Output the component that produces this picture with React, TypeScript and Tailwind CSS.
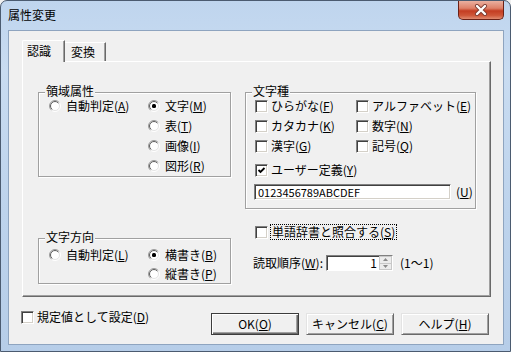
import React from "react";

const Key = ({ children }: { children: React.ReactNode }) => (
  <span className="underline underline-offset-[1px] decoration-[1px]">{children}</span>
);

const Radio = ({ checked }: { checked?: boolean }) => (
  <svg width="12" height="12" viewBox="0 0 12 12" className="shrink-0">
    <defs>
      <linearGradient id="ro" x1="0" y1="0" x2="1" y2="1">
        <stop offset="0.45" stopColor="#9a9a9a" />
        <stop offset="0.6" stopColor="#ffffff" />
      </linearGradient>
      <linearGradient id="ri" x1="0" y1="0" x2="1" y2="1">
        <stop offset="0.45" stopColor="#5a5a5a" />
        <stop offset="0.6" stopColor="#e4e4e4" />
      </linearGradient>
    </defs>
    <circle cx="6" cy="6" r="5.5" fill="none" stroke="url(#ro)" />
    <circle cx="6" cy="6" r="4.5" fill="#fff" stroke="url(#ri)" />
    {checked && <rect x="4" y="4" width="4" height="4" rx="1.5" fill="#000" />}
  </svg>
);

const Check = ({ checked }: { checked?: boolean }) => (
  <span className="shrink-0 w-[13px] h-[13px] bg-white border border-t-[#808080] border-l-[#808080] border-r-white border-b-white shadow-[inset_1px_1px_0_#404040,inset_-1px_-1px_0_#d4d0c8] flex items-center justify-center">
    {checked && (
      <svg width="9" height="9" viewBox="0 0 9 9">
        <path d="M1.5 4 L3.5 6 L7.5 2" fill="none" stroke="#000" strokeWidth="1.8" />
      </svg>
    )}
  </span>
);

const RadioRow = ({ checked, children, h = "h-[20px]" }: { checked?: boolean; children: React.ReactNode; h?: string }) => (
  <div className={`flex items-center gap-[5px] ${h}`}>
    <Radio checked={checked} />
    <span className="whitespace-nowrap leading-[14px]">{children}</span>
  </div>
);

const CheckRow = ({ checked, children }: { checked?: boolean; children: React.ReactNode }) => (
  <div className="flex items-center gap-[3px] h-[20px]">
    <Check checked={checked} />
    <span className="whitespace-nowrap leading-[14px]">{children}</span>
  </div>
);

const Group = ({ label, className, children }: { label: string; className: string; children: React.ReactNode }) => (
  <div className={`relative border border-[#a0a0a0] shadow-[inset_1px_1px_0_#fff,1px_1px_0_#fff] ${className}`}>
    <span className="absolute left-[6px] top-[-9px] bg-[#f0f0f0] px-[1px] leading-[14px] whitespace-nowrap">{label}</span>
    {children}
  </div>
);

const Button = ({ children, def }: { children: React.ReactNode; def?: boolean }) => (
  <div
    className={`w-[88px] h-[22px] flex items-center justify-center bg-[#f0f0f0] ${
      def
        ? "border border-[#3c3c3c] shadow-[inset_1px_1px_0_#fff,inset_-1px_-1px_0_#696969,inset_-2px_-2px_0_#a0a0a0]"
        : "border border-t-[#e3e3e3] border-l-[#e3e3e3] border-r-[#696969] border-b-[#696969] shadow-[inset_1px_1px_0_#fff,inset_-1px_-1px_0_#a0a0a0]"
    }`}
  >
    <span className="whitespace-nowrap leading-[14px]">{children}</span>
  </div>
);

export default function App() {
  return (
    <div className="w-[511px] h-[352px] overflow-hidden bg-[#f0f0f0] font-['Noto_Sans_CJK_JP',sans-serif] text-[12px] leading-[16px] text-black">
      <div className="w-[511px] h-[352px] flex flex-col rounded-t-[7px] border border-[#4b5b70] bg-[linear-gradient(180deg,#bfd5ee_0%,#c9dcf1_20%,#bdd3ec_60%,#b6cde8_100%)]">
        {/* title bar */}
        <div className="h-[29px] flex items-start shrink-0">
          <div className="pl-[7px] pt-[7px] leading-[14px] text-[12px] text-black">属性変更</div>
          <div className="ml-auto mr-[6px] w-[46px] h-[19px] rounded-b-[5px] border border-t-0 border-[#6b2116] bg-[linear-gradient(180deg,#eab0a0_0%,#de8068_40%,#c43d22_55%,#cf5638_80%,#e08b70_100%)] flex items-center justify-center">
            <svg width="14" height="12" viewBox="0 0 14 12">
              <path d="M3 2 L11 10 M11 2 L3 10" stroke="#7a3a30" strokeWidth="4" strokeLinecap="round" />
              <path d="M3 2 L11 10 M11 2 L3 10" stroke="#ffffff" strokeWidth="2.4" strokeLinecap="round" />
            </svg>
          </div>
        </div>

        {/* client area */}
        <div className="ml-[7px] w-[496px] h-[315px] shrink-0 border border-[#8ea4bf] bg-[#f0f0f0] flex flex-col">
          {/* tabs */}
          <div className="pl-[13px] pt-[9px]">
            <div className="h-[21px] flex items-end">
              <div className="relative z-10 w-[43px] h-[22px] mb-[-1px] bg-[#f0f0f0] border-t border-l border-white border-r border-r-[#696969] rounded-tl-[2px] shadow-[inset_-1px_0_0_#a0a0a0] pl-[4px] pt-[2px]">
                認識
              </div>
              <div className="w-[41px] h-[19px] bg-[#f0f0f0] border-t border-t-white border-r border-r-[#696969] shadow-[inset_-1px_0_0_#a0a0a0] pl-[6px] pt-[1px]">
                変換
              </div>
            </div>
            {/* panel */}
            <div className="w-[469px] h-[236px] bg-[#f0f0f0] border border-t-white border-l-white border-r-[#696969] border-b-[#696969] shadow-[inset_-1px_-1px_0_#a0a0a0] flex pl-[15px]">
              {/* left column */}
              <div className="w-[193px] pt-[30px] flex flex-col">
                <Group label="領域属性" className="h-[85px]">
                  <div className="flex pt-[3px] pl-[10px]">
                    <div className="w-[99px]">
                      <RadioRow>
                        自動判定(<Key>A</Key>)
                      </RadioRow>
                    </div>
                    <div className="flex flex-col">
                      <RadioRow checked>
                        文字(<Key>M</Key>)
                      </RadioRow>
                      <RadioRow>
                        表(<Key>T</Key>)
                      </RadioRow>
                      <RadioRow>
                        画像(<Key>I</Key>)
                      </RadioRow>
                      <RadioRow>
                        図形(<Key>R</Key>)
                      </RadioRow>
                    </div>
                  </div>
                </Group>
                <Group label="文字方向" className="h-[46px] mt-[61px]">
                  <div className="flex pt-[6px] pl-[10px]">
                    <div className="w-[99px]">
                      <RadioRow h="h-[19px]">
                        自動判定(<Key>L</Key>)
                      </RadioRow>
                    </div>
                    <div className="flex flex-col">
                      <RadioRow checked h="h-[19px]">
                        横書き(<Key>B</Key>)
                      </RadioRow>
                      <RadioRow h="h-[19px]">
                        縦書き(<Key>P</Key>)
                      </RadioRow>
                    </div>
                  </div>
                </Group>
              </div>

              {/* right column */}
              <div className="w-[231px] ml-[14px] pt-[30px] flex flex-col">
                <Group label="文字種" className="h-[117px]">
                  <div className="pt-[3px] pl-[9px] flex flex-col">
                    <div className="grid grid-cols-[101px_auto]">
                      <CheckRow>
                        ひらがな(<Key>F</Key>)
                      </CheckRow>
                      <CheckRow>
                        アルファベット(<Key>E</Key>)
                      </CheckRow>
                      <CheckRow>
                        カタカナ(<Key>K</Key>)
                      </CheckRow>
                      <CheckRow>
                        数字(<Key>N</Key>)
                      </CheckRow>
                      <CheckRow>
                        漢字(<Key>G</Key>)
                      </CheckRow>
                      <CheckRow>
                        記号(<Key>Q</Key>)
                      </CheckRow>
                    </div>
                    <div className="mt-[4px]">
                      <CheckRow checked>
                        ユーザー定義(<Key>Y</Key>)
                      </CheckRow>
                    </div>
                    <div className="mt-[4px] flex items-center">
                      <div className="ml-[-1px] w-[197px] h-[16px] bg-white border border-t-[#808080] border-l-[#808080] border-r-white border-b-white shadow-[inset_1px_1px_0_#404040,inset_-1px_-1px_0_#d4d0c8] pl-[3px] text-[11px] leading-[14px] flex items-center">
                        0123456789ABCDEF
                      </div>
                      <span className="ml-[5px]">
                        (<Key>U</Key>)
                      </span>
                    </div>
                  </div>
                </Group>
                <div className="mt-[15px] h-[16px] pl-[10px] flex items-center">
                  <Check />
                  <span className="ml-[2px] border border-dotted border-black px-[1px] leading-[14px] whitespace-nowrap">
                    単語辞書と照合する(<Key>S</Key>)
                  </span>
                </div>
                <div className="mt-[15px] h-[16px] pl-[8px] flex items-center">
                  <span className="whitespace-nowrap">
                    読取順序(<Key>W</Key>):
                  </span>
                  <div className="ml-[3px] w-[67px] h-[16px] bg-white border border-t-[#808080] border-l-[#808080] border-r-white border-b-white shadow-[inset_1px_1px_0_#404040] flex">
                    <div className="flex-1 text-right pr-[2px] leading-[14px]">1</div>
                    <div className="w-[13px] flex flex-col">
                      <div className="flex-1 bg-[#ececec] border border-[#c8c8c8] flex items-center justify-center">
                        <svg width="5" height="3" viewBox="0 0 5 3"><path d="M0 3 L2.5 0 L5 3 Z" fill="#8a8a8a" /></svg>
                      </div>
                      <div className="flex-1 bg-[#ececec] border border-t-0 border-[#c8c8c8] flex items-center justify-center">
                        <svg width="5" height="3" viewBox="0 0 5 3"><path d="M0 0 L2.5 3 L5 0 Z" fill="#8a8a8a" /></svg>
                      </div>
                    </div>
                  </div>
                  <span className="ml-[7px] whitespace-nowrap">(1〜1)</span>
                </div>
              </div>
            </div>
          </div>

          {/* bottom row */}
          <div className="mt-[12px] flex items-start">
            <div className="w-[202px] pl-[12px] h-[16px] flex items-center gap-[3px]">
              <Check />
              <span className="whitespace-nowrap">
                規定値として設定(<Key>D</Key>)
              </span>
            </div>
            <div className="mt-[4px] flex gap-[7px]">
              <Button def>
                OK(<Key>O</Key>)
              </Button>
              <Button>
                キャンセル(<Key>C</Key>)
              </Button>
              <Button>
                ヘルプ(<Key>H</Key>)
              </Button>
            </div>
          </div>
        </div>
      </div>
    </div>
  );
}
